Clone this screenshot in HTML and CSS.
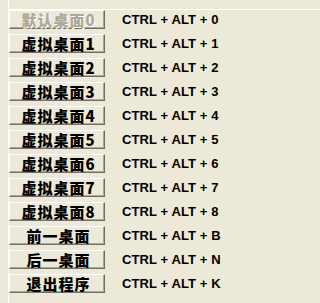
FILE: index.html
```html
<!DOCTYPE html>
<html>
<head>
<meta charset="utf-8">
<link rel="stylesheet" href="styles.css">
</head>
<body>
<div class="frame">
  <div class="panel">
    <div class="row"><div class="btn disabled">默认桌面0</div><div class="key">CTRL + ALT + 0</div></div>
    <div class="row"><div class="btn">虚拟桌面1</div><div class="key">CTRL + ALT + 1</div></div>
    <div class="row"><div class="btn">虚拟桌面2</div><div class="key">CTRL + ALT + 2</div></div>
    <div class="row"><div class="btn">虚拟桌面3</div><div class="key">CTRL + ALT + 3</div></div>
    <div class="row"><div class="btn">虚拟桌面4</div><div class="key">CTRL + ALT + 4</div></div>
    <div class="row"><div class="btn">虚拟桌面5</div><div class="key">CTRL + ALT + 5</div></div>
    <div class="row"><div class="btn">虚拟桌面6</div><div class="key">CTRL + ALT + 6</div></div>
    <div class="row"><div class="btn">虚拟桌面7</div><div class="key">CTRL + ALT + 7</div></div>
    <div class="row"><div class="btn">虚拟桌面8</div><div class="key">CTRL + ALT + 8</div></div>
    <div class="row"><div class="btn">前一桌面</div><div class="key">CTRL + ALT + B</div></div>
    <div class="row"><div class="btn">后一桌面</div><div class="key">CTRL + ALT + N</div></div>
    <div class="row"><div class="btn">退出程序</div><div class="key">CTRL + ALT + K</div></div>
  </div>
</div>
</body>
</html>
```
FILE: styles.css
```css
html, body {
  margin: 0;
  padding: 0;
  background: #ece9d8;
}
.frame {
  margin-left: 8px;
  border-left: 1px solid #ffffff;
  height: 303px;
  padding-top: 9px;
  box-sizing: border-box;
}
.panel {
  border-top: 1px solid #ffffff;
  display: flex;
  flex-direction: column;
  gap: 5px;
}
.row {
  display: flex;
  align-items: center;
  height: 19px;
}
.btn {
  width: 96px;
  height: 19px;
  box-sizing: border-box;
  border-top: 1px solid #ffffff;
  border-left: 1px solid #ffffff;
  border-right: 1px solid #716f64;
  border-bottom: 1px solid #716f64;
  box-shadow: inset -1px -1px 0 #aca899;
  background: #ece9d8;
  display: flex;
  align-items: center;
  justify-content: center;
  font-family: "Noto Sans CJK SC", sans-serif;
  font-weight: 900;
  font-size: 15px;
  letter-spacing: 1px;
  line-height: 1;
  color: #000000;
  padding-left: 3px;
  white-space: nowrap;
}
.btn.disabled {
  color: #aca899;
  text-shadow: 1px 1px 0 #ffffff;
}
.key {
  margin-left: 17px;
  font-family: "Liberation Sans", Arial, sans-serif;
  font-weight: bold;
  font-size: 13px;
  letter-spacing: 0.1px;
  color: #000000;
  white-space: nowrap;
}
```
